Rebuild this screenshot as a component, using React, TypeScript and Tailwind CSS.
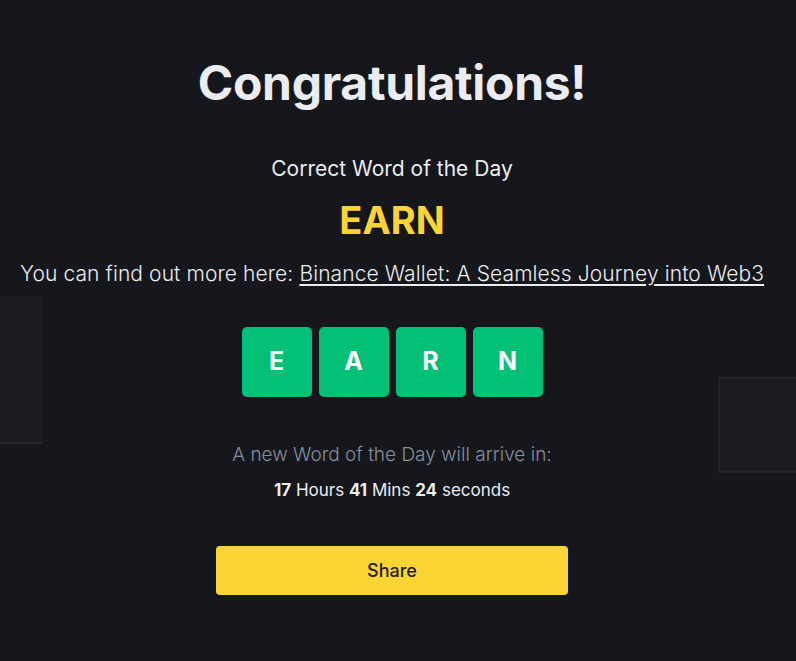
import React from 'react'

const letters = ['E', 'A', 'R', 'N']

function Tile({ letter }: { letter: string }) {
  return (
    <div className="flex h-[70px] w-[70px] items-center justify-center rounded-[5px] bg-[#02c076] text-[25px] font-bold text-white">
      {letter}
    </div>
  )
}

export default function App() {
  return (
    <div
      className="relative h-[661px] w-full overflow-hidden bg-[#16171c] text-[#eaecef]"
      style={{ fontFamily: 'Inter, "Noto Sans", sans-serif' }}
    >
      {/* faint decorative squares in the backdrop */}
      <div className="absolute left-0 top-[296px] h-[148px] w-[42px] border-b-2 border-[#25262b] bg-[#1a1b20]" />
      <div className="absolute left-[718px] top-[377px] h-[96px] w-[90px] border-2 border-[#222328] bg-[#1a1b20]" />

      <div className="relative flex w-[784px] flex-col items-center pt-[52px]">
        <h1 className="text-[48px] font-bold leading-[62px] tracking-[-0.3px] text-[#eaecef]">Congratulations!</h1>
        <p className="mt-[40px] text-[21px] leading-[30px]">Correct Word of the Day</p>
        <p className="mt-[14px] text-[38px] font-bold leading-[44px] text-[#fcd535]">EARN</p>
        <p className="mt-[17px] whitespace-nowrap text-[21px] font-light leading-[30px] tracking-[0.1px]">
          You can find out more here:{' '}
          <span className="underline underline-offset-[3px]">Binance Wallet: A Seamless Journey into Web3</span>
        </p>
        <div className="mt-[38px] flex gap-[7px]">
          {letters.map((l) => (
            <Tile key={l} letter={l} />
          ))}
        </div>
        <p className="mt-[44px] text-[19px] font-light leading-[28px] text-[#848e9c]">
          A new Word of the Day will arrive in:
        </p>
        <p className="mt-[9px] text-[17px] leading-[24px]">
          <b className="font-bold">17</b> Hours <b className="font-bold">41</b> Mins <b className="font-bold">24</b> seconds
        </p>
        <button className="mt-[44px] h-[49px] w-[352px] rounded-[4px] bg-[#fcd535] text-[18px] font-medium text-[#1e2026]">
          Share
        </button>
      </div>
    </div>
  )
}
